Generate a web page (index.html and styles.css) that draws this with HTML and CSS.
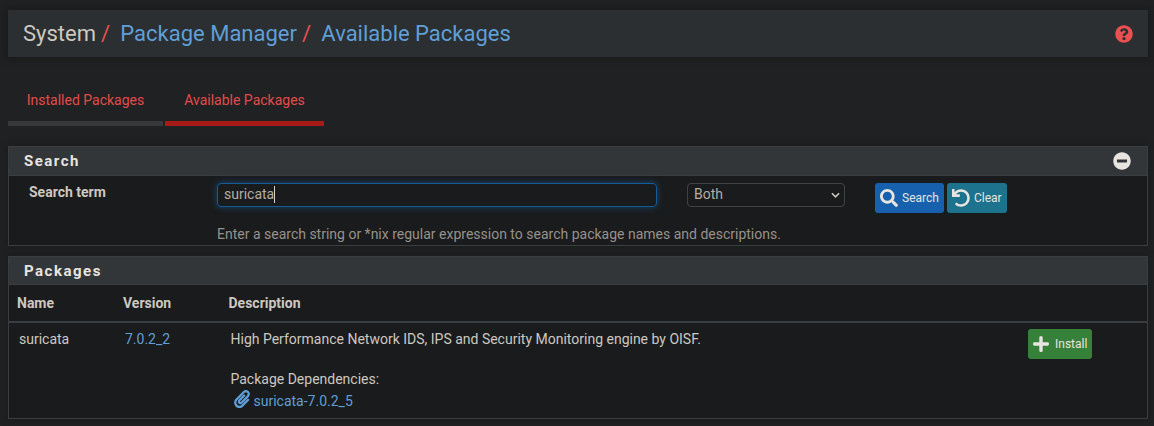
FILE: index.html
```html
<!DOCTYPE html>
<html lang="en">
<head>
<meta charset="utf-8">
<title>System: Package Manager: Available Packages</title>
<link rel="stylesheet" href="styles.css">
</head>
<body>
<header class="page-header">
  <ol class="breadcrumb">
    <li>System</li>
    <li><a>Package Manager</a></li>
    <li><a>Available Packages</a></li>
  </ol>
  <svg class="icon help" viewBox="0 0 512 512"><path d="M504 256c0 136.997-111.043 248-248 248S8 392.997 8 256C8 119.083 119.043 8 256 8s248 111.083 248 248zM262.655 90c-54.497 0-89.255 22.957-116.549 63.758-3.536 5.286-2.353 12.415 2.715 16.258l34.699 26.310c5.205 3.947 12.621 3.008 16.665-2.122 17.864-22.658 30.113-35.797 57.303-35.797 20.429 0 45.698 13.148 45.698 32.958 0 14.976-12.363 22.667-32.534 33.976C247.128 238.528 216 254.941 216 296v4c0 6.627 5.373 12 12 12h56c6.627 0 12-5.373 12-12v-1.333c0-28.462 83.186-29.647 83.186-106.667 0-58.002-60.165-102-116.531-102zM256 338c-25.365 0-46 20.635-46 46 0 25.364 20.635 46 46 46s46-20.636 46-46c0-25.365-20.635-46-46-46z"/></svg>
</header>

<nav class="tabs">
  <a class="tab tab-installed">Installed Packages</a>
  <a class="tab tab-available active">Available Packages</a>
</nav>

<section class="panel search-panel">
  <div class="panel-heading">
    <h2>Search</h2>
    <svg class="icon" viewBox="0 0 512 512"><path d="M256 8C119 8 8 119 8 256s111 248 248 248 248-111 248-248S393 8 256 8zM124 296c-6.600 0-12-5.400-12-12v-56c0-6.600 5.400-12 12-12h264c6.600 0 12 5.400 12 12v56c0 6.600-5.400 12-12 12H124z"/></svg>
  </div>
  <div class="search-form">
    <span class="label">Search term</span>
    <div class="input"><span>suricata</span><i class="caret"></i></div>
    <div class="select"><span>Both</span><svg viewBox="0 0 10 6"><path d="M1 1l4 4 4-4"/></svg></div>
    <div class="buttons">
      <a class="btn btn-primary"><svg class="icon" viewBox="0 0 512 512"><path d="M505 442.700L405.300 343c-4.500-4.500-10.600-7-17-7H372c27.600-35.300 44-79.700 44-128C416 93.100 322.900 0 208 0S0 93.100 0 208s93.100 208 208 208c48.300 0 92.700-16.400 128-44v16.300c0 6.400 2.500 12.500 7 17l99.700 99.700c9.400 9.400 24.600 9.400 33.900 0l28.300-28.300c9.400-9.400 9.400-24.600.1-34zM208 336c-70.700 0-128-57.200-128-128 0-70.700 57.200-128 128-128 70.700 0 128 57.200 128 128 0 70.700-57.200 128-128 128z"/></svg><span>Search</span></a>
      <a class="btn btn-info"><svg class="icon" viewBox="0 0 512 512"><path d="M212.333 224.333H12c-6.627 0-12-5.373-12-12V12C0 5.373 5.373 0 12 0h48c6.627 0 12 5.373 12 12v78.112C117.773 39.279 184.260 7.470 258.175 8.007c136.906.994 246.448 111.623 246.157 248.532C504.041 393.258 393.120 504 256.333 504c-64.089 0-122.496-24.313-166.510-64.215-5.099-4.622-5.334-12.554-.467-17.420l33.967-33.967c4.474-4.474 11.662-4.717 16.401-.525C170.760 415.336 211.580 432 256.333 432c97.268 0 176-78.716 176-176 0-97.267-78.716-176-176-176-58.496 0-110.280 28.476-142.274 72.333h98.274c6.627 0 12 5.373 12 12v48c0 6.627-5.373 12-12 12z"/></svg><span>Clear</span></a>
    </div>
    <span class="help-text">Enter a search string or *nix regular expression to search package names and descriptions.</span>
  </div>
</section>

<section class="panel packages-panel">
  <div class="panel-heading"><h2>Packages</h2></div>
  <div class="row head"><b>Name</b><b>Version</b><b>Description</b></div>
  <div class="row item">
    <span>suricata</span>
    <a>7.0.2_2</a>
    <div class="description">
      <p>High Performance Network IDS, IPS and Security Monitoring engine by OISF.</p>
      <p class="deps">Package Dependencies:</p>
      <a class="dep"><svg class="icon clip" viewBox="0 0 448 512"><path d="M43.246 466.142c-58.430-60.289-57.341-157.511 1.386-217.581L254.392 34c44.316-45.332 116.351-45.336 160.671 0 43.890 44.894 43.943 117.329 0 162.276L232.214 383.128c-29.855 30.537-78.633 30.111-107.982-.998-28.275-29.970-27.368-77.473 1.452-106.953l143.743-146.835c6.182-6.314 16.312-6.422 22.626-.241l22.861 22.379c6.315 6.182 6.422 16.312.241 22.626L171.427 319.927c-4.932 5.045-5.236 13.428-.648 18.292 4.372 4.634 11.245 4.711 15.688.165l182.849-186.851c19.613-20.062 19.613-52.725-.011-72.798-19.189-19.627-49.957-19.637-69.154 0L90.390 293.295c-34.763 35.560-35.299 93.120-1.191 128.313 34.010 35.093 88.985 35.137 123.058.286l172.060-175.999c6.177-6.319 16.307-6.433 22.626-.256l22.877 22.364c6.319 6.177 6.434 16.307.256 22.626l-172.060 175.998c-59.576 60.938-155.943 60.216-214.770-.485z"/></svg><span>suricata-7.0.2_5</span></a>
    </div>
    <a class="btn btn-success"><svg class="icon plus" viewBox="0 0 448 512"><path d="M416 208H272V64c0-17.670-14.330-32-32-32h-32c-17.670 0-32 14.330-32 32v144H32c-17.670 0-32 14.330-32 32v32c0 17.670 14.330 32 32 32h144v144c0 17.670 14.330 32 32 32h32c17.670 0 32-14.330 32-32V304h144c17.670 0 32-14.330 32-32v-32c0-17.670-14.330-32-32-32z"/></svg><span>Install</span></a>
  </div>
</section>
</body>
</html>
```

FILE: styles.css
```css
* { box-sizing: border-box; }

body {
  margin: 0;
  padding: 10px 6px 0 8px;
  height: 426px;
  overflow: hidden;
  background: #202122;
  color: #cdc8c0;
  font: 14px/20px Roboto, "Liberation Sans", sans-serif;
}

a { color: #5f9fd8; text-decoration: none; }
p, h2, ol { margin: 0; padding: 0; }

.icon { display: block; width: 18px; height: 18px; fill: currentColor; flex: none; }

.page-header {
  display: flex;
  align-items: center;
  justify-content: space-between;
  height: 47px;
  padding: 0 15px;
  background: #2b2f31;
  box-shadow: 0 0 8px 2px rgba(0, 0, 0, .25);
}

.breadcrumb {
  display: flex;
  list-style: none;
  font-size: 22px;
  line-height: 30px;
}
.breadcrumb li + li::before {
  content: "/";
  color: #e9504f;
  padding: 0 10.300px 0 5px;
}
.help { color: #e9504f; }

.tabs {
  display: flex;
  gap: 2px;
  height: 69px;
  padding-top: 23px;
}
.tab {
  height: 46px;
  padding-top: 10px;
  border-bottom: 5px solid #37393b;
  color: #e34b4b;
  text-align: center;
}
.tab-installed { width: 155px; }
.tab-available { width: 159px; }
.tab.active { border-color: #a61b18; }

.panel {
  margin-top: 20px;
  border: 1px solid #3b3e40;
  background: #1a1b1c;
  box-shadow: 0 0 8px 1px rgba(0, 0, 0, .2);
}
.panel-heading {
  display: flex;
  align-items: center;
  justify-content: space-between;
  height: 29px;
  padding: 0 16px 0 15px;
  border-bottom: 1px solid #3b3e40;
  background: #323639;
  color: #e8e4df;
}
.panel-heading h2 {
  font-size: 15px;
  line-height: 20px;
  font-weight: 700;
  letter-spacing: 1.500px;
}

.search-panel { height: 100px; }
.search-form {
  display: grid;
  grid-template-columns: 188px 470px 188px auto;
  grid-template-rows: 30px 20px;
  row-gap: 11px;
  padding: 7px 0 0 20px;
  align-items: start;
}
.label { font-weight: 700; line-height: 18px; }
.input, .select {
  display: flex;
  align-items: center;
  height: 24px;
  padding: 0 6px 1px;
  border: 1px solid #3f4244;
  border-radius: 4px;
}
.input, .select { line-height: 18px; padding-bottom: 2px; }
.input { width: 440px; color: #b3ada5; border-color: #155b98; box-shadow: 0 0 7px rgba(20, 95, 160, .65); }
.caret { width: 1px; height: 17px; background: #d8d3cb; }
.select { width: 158px; color: #b3ada5; justify-content: space-between; padding-right: 4px; }
.select svg { width: 9px; height: 6px; margin-top: 2px; fill: none; stroke: #cdc8c0; stroke-width: 1.7; }
.buttons { display: flex; gap: 3px; }
.help-text { grid-column: 2 / 5; color: #97918a; }

.btn {
  display: flex;
  align-items: center;
  gap: 4px;
  height: 30px;
  padding: 0 5px;
  border-radius: 3px;
  color: #e8e4df;
  font-size: 12px;
}
.btn-primary { width: 69px; background: #1760ad; }
.btn-info { width: 60px; background: #1d738e; }
.btn-success { width: 64px; background: #37803a; gap: 6px; }
.plus { width: 16px; }

.packages-panel { margin-top: 10px; height: 163px; }
.packages-panel .panel-heading { height: 28px; }
.row {
  display: grid;
  grid-template-columns: 106px 105.500px 797.500px auto;
  align-items: start;
}
.head {
  height: 38px;
  padding: 8px 0 0 8px;
  border-bottom: 2px solid #3b3e40;
}
.item { padding: 6px 0 0 10px; }
.item .btn { justify-self: start; }
.deps { margin-top: 20px; }
.dep { display: flex; align-items: center; gap: 4px; padding: 1px 0 0 3px; }
.clip { width: 16px; margin-bottom: 4px; }
```
